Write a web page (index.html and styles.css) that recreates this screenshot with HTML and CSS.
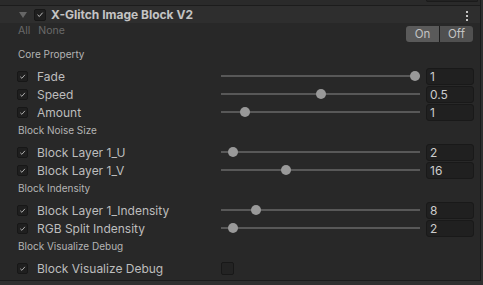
FILE: index.html
```html
<!DOCTYPE html>
<html lang="en">
<head>
    <meta charset="UTF-8">
    <meta name="viewport" content="width=device-width, initial-scale=1.0">
    <title>X-Glitch Image Block V2</title>
    <link rel="stylesheet" href="styles.css">
</head>
<body>
    <div class="inspector">
        <div class="prev-strip"><div class="prev-field"></div></div>

        <div class="comp-header">
            <span class="foldout"></span>
            <span class="check big"><svg viewBox="0 0 12 12"><path d="M3 6.3 L5.2 8.4 L9.2 3.8" /></svg></span>
            <span class="comp-title">X-Glitch Image Block V2</span>
            <span class="kebab"><i></i><i></i><i></i></span>
        </div>

        <div class="toolbar">
            <div class="all-none"><span>All</span><span>None</span></div>
            <div class="toggle">
                <span class="seg on">On</span>
                <span class="seg">Off</span>
            </div>
        </div>

        <!-- Core Property -->
        <div class="section">Core Property</div>
        <div class="row">
            <div class="label-area">
                <span class="check"><svg viewBox="0 0 12 12"><path d="M3 6.3 L5.2 8.4 L9.2 3.8" /></svg></span>
                <span class="label">Fade</span>
            </div>
            <div class="slider"><span class="thumb" style="--v: 1"></span></div>
            <div class="field">1</div>
        </div>
        <div class="row">
            <div class="label-area">
                <span class="check"><svg viewBox="0 0 12 12"><path d="M3 6.3 L5.2 8.4 L9.2 3.8" /></svg></span>
                <span class="label">Speed</span>
            </div>
            <div class="slider"><span class="thumb" style="--v: 0.5"></span></div>
            <div class="field">0.5</div>
        </div>
        <div class="row">
            <div class="label-area">
                <span class="check"><svg viewBox="0 0 12 12"><path d="M3 6.3 L5.2 8.4 L9.2 3.8" /></svg></span>
                <span class="label">Amount</span>
            </div>
            <div class="slider"><span class="thumb" style="--v: 0.1"></span></div>
            <div class="field">1</div>
        </div>

        <!-- Block Noise Size -->
        <div class="section">Block Noise Size</div>
        <div class="row">
            <div class="label-area">
                <span class="check"><svg viewBox="0 0 12 12"><path d="M3 6.3 L5.2 8.4 L9.2 3.8" /></svg></span>
                <span class="label">Block Layer 1_U</span>
            </div>
            <div class="slider"><span class="thumb" style="--v: 0.035"></span></div>
            <div class="field">2</div>
        </div>
        <div class="row">
            <div class="label-area">
                <span class="check"><svg viewBox="0 0 12 12"><path d="M3 6.3 L5.2 8.4 L9.2 3.8" /></svg></span>
                <span class="label">Block Layer 1_V</span>
            </div>
            <div class="slider"><span class="thumb" style="--v: 0.317"></span></div>
            <div class="field">16</div>
        </div>

        <!-- Block Indensity -->
        <div class="section">Block Indensity</div>
        <div class="row">
            <div class="label-area">
                <span class="check"><svg viewBox="0 0 12 12"><path d="M3 6.3 L5.2 8.4 L9.2 3.8" /></svg></span>
                <span class="label">Block Layer 1_Indensity</span>
            </div>
            <div class="slider"><span class="thumb" style="--v: 0.16"></span></div>
            <div class="field">8</div>
        </div>
        <div class="row">
            <div class="label-area">
                <span class="check"><svg viewBox="0 0 12 12"><path d="M3 6.3 L5.2 8.4 L9.2 3.8" /></svg></span>
                <span class="label">RGB Split Indensity</span>
            </div>
            <div class="slider"><span class="thumb" style="--v: 0.035"></span></div>
            <div class="field">2</div>
        </div>

        <!-- Block Visualize Debug -->
        <div class="section">Block Visualize Debug</div>
        <div class="row">
            <div class="label-area">
                <span class="check"><svg viewBox="0 0 12 12"><path d="M3 6.3 L5.2 8.4 L9.2 3.8" /></svg></span>
                <span class="label">Block Visualize Debug</span>
            </div>
            <span class="toggle-box"></span>
        </div>
    </div>
</body>
</html>
```

FILE: styles.css
```css
body {
    margin: 0;
    background: #2f2f2f;
    font-family: Inter, "Noto Sans", sans-serif;
    color: #c4c4c4;
}
.inspector {
    width: 480px;
    height: 280px;
    background: #282828;
    border-right: 1px solid #1b1b1b;
    border-bottom: 1px solid #1b1b1b;
}
.prev-strip {
    height: 5px;
    background: #2a2a2a;
    border-bottom: 1px solid #1c1c1c;
    display: flex;
    justify-content: flex-end;
    padding-right: 2px;
}
.prev-field {
    width: 50px;
    height: 1px;
    background: #222;
    border: 1px solid #1b1b1b;
    border-top: none;
    border-radius: 0 0 2px 2px;
}
.comp-header {
    height: 17px;
    background: #2e2e2e;
    display: flex;
    align-items: center;
}
.foldout {
    width: 0;
    height: 0;
    margin-left: 19px;
    border-left: 4px solid transparent;
    border-right: 4px solid transparent;
    border-top: 6px solid #666;
}
.check {
    width: 11px;
    height: 11px;
    box-sizing: border-box;
    background: #1f1f1f;
    border: 1px solid #171717;
    border-radius: 2px;
    display: inline-flex;
    align-items: center;
    justify-content: center;
}
.check svg {
    width: 11px;
    height: 11px;
    fill: none;
    stroke: #bdbdbd;
    stroke-width: 1.2;
}
.check.big {
    width: 12px;
    height: 12px;
    margin-left: 7px;
}
.comp-title {
    margin-left: 5px;
    font-size: 12px;
    font-weight: 700;
    color: #c4c4c4;
}
.kebab {
    margin-left: auto;
    margin-right: 12px;
    display: flex;
    flex-direction: column;
    gap: 2px;
    padding-top: 3px;
}
.kebab i {
    width: 2px;
    height: 2px;
    background: #c4c4c4;
}
.toolbar {
    height: 22px;
    display: flex;
    justify-content: space-between;
    align-items: flex-start;
}
.all-none {
    margin-top: 1px;
    margin-left: 18px;
    font-size: 10.5px;
    line-height: 14px;
    color: #6a6a6a;
    display: flex;
    gap: 8px;
}
.toggle {
    display: flex;
    margin-top: 3px;
    margin-right: 7px;
    height: 16px;
    border-radius: 3px;
    overflow: hidden;
    background: #1e1e1e;
    gap: 1px;
}
.seg {
    width: 33px;
    font-size: 11.5px;
    line-height: 16px;
    text-align: center;
    background: #505050;
    color: #c4c4c4;
}
.seg.on {
    background: #5a5a5a;
}
.section {
    height: 18px;
    padding-bottom: 4px;
    line-height: 18px;
    padding-left: 18px;
    font-size: 10px;
    color: #b4b4b4;
}
.row {
    height: 18px;
    display: flex;
    align-items: center;
}
.label-area {
    width: 221px;
    display: flex;
    align-items: center;
    padding-left: 17px;
    box-sizing: border-box;
}
.label {
    margin-left: 9px;
    font-size: 12px;
    color: #bdbdbd;
}
.slider {
    width: 199px;
    height: 2px;
    background: #585858;
    position: relative;
}
.thumb {
    position: absolute;
    top: -4px;
    left: calc(var(--v) * 189px);
    width: 10px;
    height: 10px;
    border-radius: 50%;
    background: #999;
}
.field {
    margin-left: 6px;
    width: 48px;
    height: 17px;
    box-sizing: border-box;
    background: #202020;
    border: 1px solid #191919;
    border-radius: 3px;
    padding-left: 3px;
    font-size: 12px;
    line-height: 15px;
    color: #cccccc;
}
.toggle-box {
    width: 13px;
    height: 13px;
    box-sizing: border-box;
    background: #232323;
    border: 1px solid #181818;
    border-radius: 2px;
}
```
